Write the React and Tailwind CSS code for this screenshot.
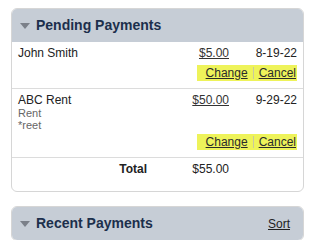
import React from 'react'

const font = { fontFamily: '"Liberation Sans", Arial, sans-serif' }

function Caret() {
  return (
    <svg width="10" height="6" viewBox="0 0 10 6" className="shrink-0">
      <path d="M0 0 L10 0 L5 6 Z" fill="#7b8089" />
    </svg>
  )
}

function PanelHeader({ title, right }) {
  return (
    <div className="flex items-center h-[33px] bg-[#c6cdd6] pl-[8px] pr-[13px]">
      <Caret />
      <span className="ml-[6px] text-[14px] font-bold text-[#1c2f4c] flex-1">{title}</span>
      {right}
    </div>
  )
}

function Actions() {
  return (
    <div className="flex justify-end">
      <div className="flex items-center h-[16px] bg-[#eef35a] pl-[9px] pr-[1px] text-[12px] text-[#2b2b2b]">
        <a href="#" className="underline">Change</a>
        <span className="w-px h-[12px] bg-[#c9c9a0] mx-[5px]"></span>
        <a href="#" className="underline">Cancel</a>
      </div>
    </div>
  )
}

function PaymentRow({ name, amount, date, notes }) {
  return (
    <div className="px-[6px] pt-[4px] pb-[7px] border-b border-[#dcdcdc]">
      <div className="flex leading-[14px] text-[12px] text-[#222]">
        <span className="flex-1">{name}</span>
        <a href="#" className="underline text-[#333]">{amount}</a>
        <span className="w-[68px] text-right">{date}</span>
      </div>
      {notes && (
        <div className="text-[11px] leading-[12px] text-[#666]">
          {notes.map((n) => (
            <div key={n}>{n}</div>
          ))}
        </div>
      )}
      <div className={notes ? 'mt-[3px]' : 'mt-[5px]'}>
        <Actions />
      </div>
    </div>
  )
}

export default function App() {
  return (
    <div className="bg-white w-[314px] h-[240px] overflow-hidden pt-[8px] pl-[11px] pr-[10px]" style={font}>
      <div className="border border-[#d6d6d6] rounded-[6px] overflow-hidden">
        <PanelHeader title="Pending Payments" />
        <PaymentRow name="John Smith" amount="$5.00" date="8-19-22" />
        <PaymentRow name="ABC Rent" amount="$50.00" date="9-29-22" notes={['Rent', '*reet']} />
        <div className="flex px-[6px] pt-[4px] pb-[15px] text-[12px] leading-[14px] text-[#222]">
          <span className="w-[129px] text-right font-bold">Total</span>
          <span className="flex-1 text-right">$55.00</span>
          <span className="w-[68px]"></span>
        </div>
      </div>
      <div className="mt-[14px] border border-[#d6d6d6] rounded-[6px] overflow-hidden">
        <PanelHeader
          title="Recent Payments"
          right={<a href="#" className="text-[12px] underline text-[#222]">Sort</a>}
        />
      </div>
    </div>
  )
}
